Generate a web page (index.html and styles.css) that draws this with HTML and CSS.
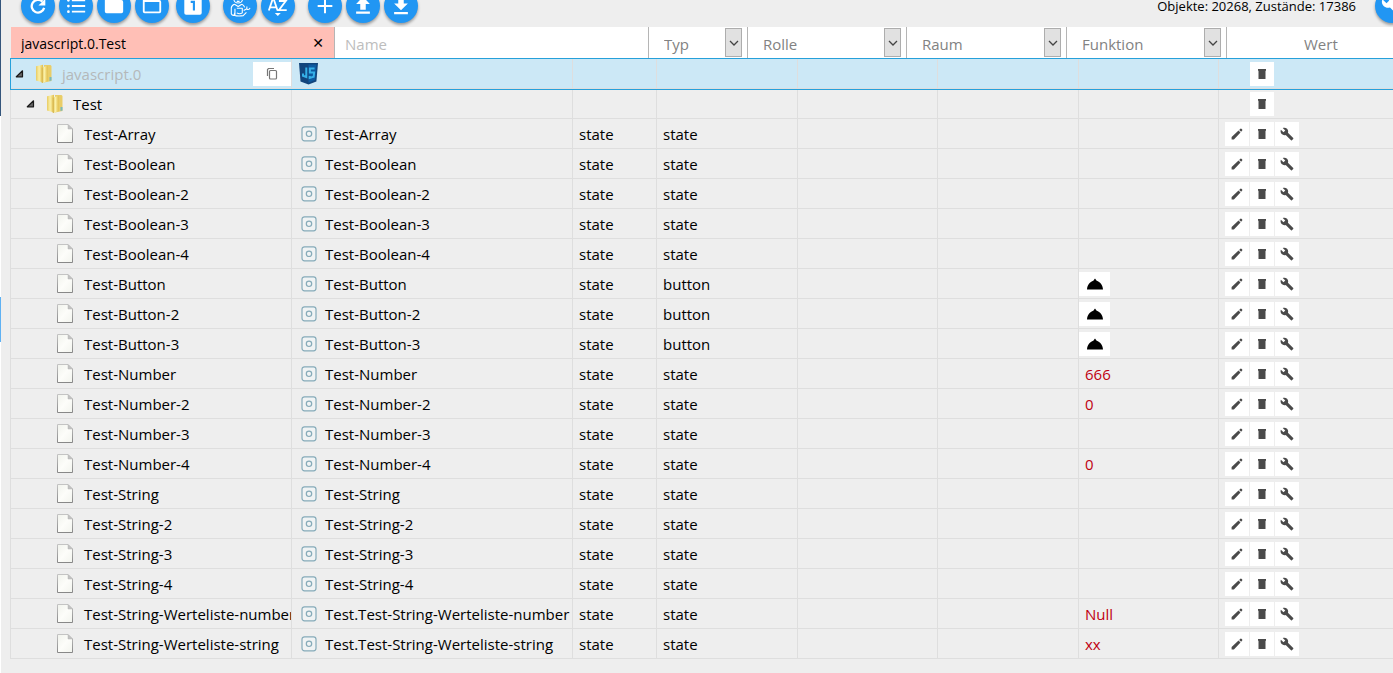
FILE: index.html
```html
<!DOCTYPE html>
<html lang="de">
<head>
<meta charset="utf-8">
<meta name="viewport" content="width=device-width, initial-scale=1">
<title>Objekte</title>
<link rel="stylesheet" href="styles.css">
</head>
<body>
<svg class="sprite" aria-hidden="true">
  <defs>
    <linearGradient id="gold" x1="0" x2="1"><stop offset="0" stop-color="#e8cb62"/><stop offset=".45" stop-color="#faf0a8"/><stop offset="1" stop-color="#e3c04c"/></linearGradient>
    <linearGradient id="paper" x1="0" y1="0" x2="1" y2="1"><stop offset="0" stop-color="#f0f2ec"/><stop offset=".5" stop-color="#fdfdfa"/><stop offset="1" stop-color="#f2f4ee"/></linearGradient>
    <linearGradient id="edge" x1="0" y1="0" x2="0" y2="1"><stop offset="0" stop-color="#c4c4c4"/><stop offset="1" stop-color="#888"/></linearGradient>
  </defs>
  <symbol id="folder" viewBox="0 0 18 20"><path d="M9 1h6.500l1 1v15L9 18.500z" fill="#e9cd68"/><path d="M1 2.200 8 .8v17.700l-7-2z" fill="url(#gold)"/><path d="M7 3.500 12.500 1.800v15.500L7 19z" fill="url(#gold)"/><path d="M7.200 3.500V19" stroke="#c9a437" stroke-width=".7"/><path d="M14.500 13h2v3.500l-2 .5z" fill="#79b9bd"/></symbol>
  <symbol id="page" viewBox="0 0 16 19"><path d="M.5.5h10.500l4.500 4.500v13.500H.5z" fill="url(#paper)" stroke="url(#edge)"/><path d="M11 .5V5h4.500z" fill="#c2c2c2" stroke="#b5b5b5" stroke-width=".5"/></symbol>
  <symbol id="arrow" viewBox="0 0 9 9"><path d="M7.500 1.800v6H1.300z" fill="#666" stroke="#1a1a1a" stroke-width="1.200" stroke-linejoin="round"/></symbol>
  <symbol id="state" viewBox="0 0 16 16"><rect x="1" y=".8" width="14" height="14" rx="2.500" fill="#f0f3f4" stroke="#86abb9" stroke-width="1.200"/><circle cx="8" cy="7.800" r="2.700" fill="none" stroke="#86abb9" stroke-width="1.200"/></symbol>
  <symbol id="js" viewBox="0 0 20 22"><path d="M0 0h19l-1.600 18.500L9.500 21.500l-8-3z" fill="#12457c"/><path d="M9.500 1.500h8l-1.400 15.500-6.600 2.700z" fill="#0d5aa0"/><path d="M7.300 4.500v9.500L4 12.800v-2.300M15.600 5.500h-4.700v4h4.200l-.4 4.300-4 1.100v-2" fill="none" stroke="#35b0e8" stroke-width="2"/></symbol>
  <symbol id="copy" viewBox="0 0 12 14"><path d="M1.500 9V2.500l1-1H8" fill="none" stroke="#777" stroke-width="1.200"/><rect x="3.500" y="3.500" width="7" height="8.500" rx="1" fill="none" stroke="#777" stroke-width="1.200"/></symbol>
  <symbol id="pencil" viewBox="0 0 12 12"><path d="M.6 11.400V9L7.500 2.500l2 2L2.900 11.400zM8.200 1.900l1.200-1.100q.5-.4 1 0l.8.8q.4.500 0 1L10.100 3.800z" fill="#4a4a4a"/></symbol>
  <symbol id="trash" viewBox="0 0 10 12"><path d="M1 1h8v1.700H1zM1.500 2.600h7V11h-7z" fill="#4a4a4a"/></symbol>
  <symbol id="wrench" viewBox="0 0 24 24"><path d="M22.700 19 13.600 9.900c.9-2.300.4-5-1.500-6.900-2-2-5-2.400-7.400-1.300L9 6 6 9 1.600 4.700C.4 7.100.9 10.100 2.900 12.100c1.900 1.900 4.600 2.400 6.900 1.500l9.100 9.100c.4.400 1 .4 1.400 0l2.300-2.300c.5-.4.5-1.100.1-1.400z"/></symbol>
  <symbol id="bell" viewBox="0 0 18 12"><path d="M1 11.500c.3-4.500 3-7.500 6.300-8.700L9 .5l1.700 2.300C14 4 16.700 7 17 11.500z" fill="#000"/></symbol>
  <symbol id="chevron" viewBox="0 0 10 6"><path d="m1 1 4 4 4-4" fill="none" stroke="#444" stroke-width="1.300"/></symbol>
  <symbol id="refresh" viewBox="0 0 24 24"><path d="M16.800 7.200A6.900 6.900 0 1 0 18.700 14" fill="none" stroke="#fff" stroke-width="2.500"/><path d="M20 4v7.500h-7.500z" fill="#fff"/></symbol>
  <symbol id="list" viewBox="0 0 24 24"><path d="M7.500 5.800H22M7.500 12H22M7.500 18.200H22" stroke="#fff" stroke-width="2"/><g fill="#fff"><circle cx="3.700" cy="5.800" r="1.500"/><circle cx="3.700" cy="12" r="1.500"/><circle cx="3.700" cy="18.200" r="1.500"/></g></symbol>
  <symbol id="closed" viewBox="0 0 24 24"><path d="M2 5q0-2 2-2h6l2 2.500h8q2 0 2 2V18q0 2-2 2H4q-2 0-2-2z" fill="#fff"/></symbol>
  <symbol id="open" viewBox="0 0 24 24"><path d="M2 5q0-2 2-2h6l2 2.500h8q2 0 2 2V18q0 2-2 2H4q-2 0-2-2zM4 7.500V18h16V7.500z" fill="#fff" fill-rule="evenodd"/></symbol>
  <symbol id="one" viewBox="0 0 24 24"><rect x="2.500" y="2" width="19" height="19.500" rx="2" fill="#fff"/><path d="M9.500 7.500h3.500V17" fill="none" stroke="#2196f3" stroke-width="2.300"/></symbol>
  <symbol id="expert" viewBox="0 0 24 24"><g fill="none" stroke="#fff" stroke-width="1.200" stroke-linejoin="round"><circle cx="10" cy="4" r="4.800"/><path d="M8 4h.5M11.500 4h.5M8.500 6.500q1.500 1 3 0M6 10l4 2.500L14 10M6 10q-3 .8-3.500 4v6.500q1 2.500 4 1.500v-7M14 10q2.500 1 3 3.500M8.500 14.500h6v5q-3 2-6 0M6.500 19l-1 3q4 1.500 10 .5l3.500-3.500M16 17l3.500-2V12.500M19.500 15.500q2.500 1 3.500-1.500"/></g></symbol>
  <symbol id="sort" viewBox="0 0 24 24"><path d="m2 17 4-12h1.500l4 12M3.600 13.500h6.300M13 6.500h7.500L13 16.500H21.500" fill="none" stroke="#fff" stroke-width="2"/><path d="M8.500 19.500h6.500L11.800 22.800z" fill="#fff"/></symbol>
  <symbol id="plus" viewBox="0 0 24 24"><path d="M12 4v16M4 12h16" stroke="#fff" stroke-width="2.200"/></symbol>
  <symbol id="upload" viewBox="0 0 24 24"><path d="M12 2 4.500 9.700H9V16h6V9.700h4.500zM4.500 18h15v2.500h-15z" fill="#fff"/></symbol>
  <symbol id="download" viewBox="0 0 24 24"><path d="M9 3v6.300H4.500L12 16.500l7.500-7.200H15V3zM4.500 18.500h15V21h-15z" fill="#fff"/></symbol>
</svg>

<div class="app">
  <div class="rail"><span class="rail-top"></span><span class="rail-mark"></span></div>
  <main class="objects">
    <div class="toolbar">
      <div class="group">
        <button class="round" aria-label="Aktualisieren"><svg><use href="#refresh"/></svg></button>
        <button class="round" aria-label="Listenansicht"><svg><use href="#list"/></svg></button>
        <button class="round" aria-label="Alle zuklappen"><svg><use href="#closed"/></svg></button>
        <button class="round" aria-label="Alle aufklappen"><svg><use href="#open"/></svg></button>
      </div>
      <div class="group near"><button class="round" aria-label="Eine Ebene"><svg><use href="#one"/></svg></button></div>
      <div class="group">
        <button class="round" aria-label="Expertenmodus"><svg><use href="#expert"/></svg></button>
        <button class="round" aria-label="Sortieren"><svg><use href="#sort"/></svg></button>
      </div>
      <div class="group">
        <button class="round" aria-label="Hinzufügen"><svg><use href="#plus"/></svg></button>
        <button class="round" aria-label="Hochladen"><svg><use href="#upload"/></svg></button>
        <button class="round" aria-label="Herunterladen"><svg><use href="#download"/></svg></button>
      </div>
      <p class="counts">Objekte: 20268, Zustände: 17386</p>
      <button class="round settings" aria-label="Einstellungen"><svg><use href="#wrench"/></svg></button>
    </div>

    <div class="filters">
      <div class="filter active"><input type="text" value="javascript.0.Test" aria-label="ID"><button class="clear" aria-label="Filter löschen">✕</button></div>
      <div class="filter"><input type="text" placeholder="Name" aria-label="Name"></div>
      <div class="filter pick"><select aria-label="Typ"><option>Typ</option></select><span class="drop"><svg><use href="#chevron"/></svg></span></div>
      <div class="filter pick"><select aria-label="Rolle"><option>Rolle</option></select><span class="drop"><svg><use href="#chevron"/></svg></span></div>
      <div class="filter pick"><select aria-label="Raum"><option>Raum</option></select><span class="drop"><svg><use href="#chevron"/></svg></span></div>
      <div class="filter pick"><select aria-label="Funktion"><option>Funktion</option></select><span class="drop"><svg><use href="#chevron"/></svg></span></div>
      <div class="filter value-head">Wert</div>
    </div>

    <table class="tree">
      <colgroup><col class="c-id"><col class="c-name"><col class="c-type"><col class="c-role"><col class="c-room"><col class="c-function"><col class="c-value"><col></colgroup>
      <tbody id="rows">
        <tr class="selected">
          <td><div class="node"><svg class="arrow"><use href="#arrow"/></svg><svg class="folder"><use href="#folder"/></svg><span class="label">javascript.0</span><button class="copy" aria-label="Kopieren"><svg><use href="#copy"/></svg></button></div></td>
          <td><div class="name"><svg class="js"><use href="#js"/></svg></div></td>
          <td></td><td></td><td></td><td></td><td></td>
          <td><div class="actions only"><button class="tool" aria-label="Löschen"><svg><use href="#trash"/></svg></button></div></td>
        </tr>
        <tr>
          <td><div class="node level-1"><svg class="arrow"><use href="#arrow"/></svg><svg class="folder"><use href="#folder"/></svg><span class="label">Test</span></div></td>
          <td></td><td></td><td></td><td></td><td></td><td></td>
          <td><div class="actions only"><button class="tool" aria-label="Löschen"><svg><use href="#trash"/></svg></button></div></td>
        </tr>
      </tbody>
    </table>
  </main>
</div>
<script src="script.js"></script>
</body>
</html>
```
FILE: styles.css
```css
* { box-sizing: border-box; }

body {
  margin: 0;
  overflow: hidden;
  background: #eee;
  color: #000;
  font: 15px/22px "Open Sans", "Noto Sans", sans-serif;
}

button, input, select { font: inherit; color: inherit; border: 0; padding: 0; margin: 0; }
button { cursor: pointer; }
svg { display: block; flex: none; }
.sprite { position: absolute; width: 0; height: 0; }

.app { display: flex; min-height: 100vh; }
.rail { flex: none; width: 1px; background: #fff; }
.rail span { display: block; }
.rail-top { height: 116px; background: #34567c; }
.rail-mark { height: 45px; margin-top: 181px; background: #5eb1f3; }
.objects { flex: 1; min-width: 0; padding-left: 9px; }

.toolbar {
  display: flex;
  align-items: flex-end;
  gap: 13px;
  height: 27px;
  padding: 0 0 4px 11px;
}
.group { display: flex; gap: 4px; }
.group.near { margin-left: -6px; }
.round {
  display: grid;
  place-items: center;
  flex: none;
  width: 34px;
  height: 34px;
  border-radius: 50%;
  background: #2196f3;
  box-shadow: 0 2px 3px rgba(0, 0, 0, .35);
}
.round svg { width: 22px; height: 22px; fill: #fff; }
.counts { margin: 0 6px 6px auto; font-size: 13px; white-space: nowrap; }
.settings { margin-right: -16px; }

.filters {
  display: grid;
  grid-template-columns: 324px 314px 99px 159px 160px 160px 1fr;
  height: 32px;
  margin-left: 1px;
  background: #fff;
  color: #828282;
}
.filter { display: flex; min-width: 0; border-right: 1px solid #b5b5b5; }
.filter:last-child { border-right: 0; }
.filter input { flex: 1; min-width: 0; padding: 2px 10px 0; background: none; outline: 0; }
.filter input::placeholder { color: #bdbdbd; opacity: 1; }
.filter.active { background: #ffbfb6; color: #000; font-size: 14px; }
.clear { width: 32px; background: none; font: 14px/20px "DejaVu Sans", sans-serif; }
.pick { display: grid; grid-template-columns: 1fr 17px 5px; }
.pick select {
  grid-area: 1 / 1 / 2 / 4;
  appearance: none;
  padding: 2px 0 0 15px;
  background: none;
}
.drop {
  grid-area: 1 / 2;
  display: grid;
  place-items: center;
  height: 29px;
  margin-top: 1px;
  border: 1px solid #adadad;
  background: #e1e1e1;
  pointer-events: none;
}
.drop svg { width: 10px; height: 6px; }
.value-head { align-items: center; padding: 2px 0 0 77px; }

.tree {
  width: 100%;
  table-layout: fixed;
  border-collapse: separate;
  border-spacing: 0;
  border-left: 1px solid #dedede;
}
.c-id, .c-name { width: 281px; }
.c-type { width: 84px; }
.c-role, .c-function { width: 141px; }
.c-room, .c-value { width: 140px; }
.tree td {
  height: 30px;
  padding: 1px 0 0 6px;
  border-right: 1px solid #dedede;
  border-bottom: 1px solid #dedede;
  overflow: hidden;
  white-space: nowrap;
}
.tree td:first-child { padding: 0 0 0 4px; }
.tree td:nth-child(2), .tree td:last-child { padding-top: 0; }
.tree td:last-child { border-right: 0; }
.selected { background: #cce8f6; outline: 1px solid #26a0da; }
.selected .label { color: #b4b8ba; }

.node, .name { display: flex; align-items: center; height: 29px; }
.label, .name span { padding-top: 1px; }
.arrow { width: 9px; height: 9px; margin-right: 11px; }
.folder { width: 18px; height: 20px; margin-right: 9px; }
.level-1 { padding-left: 11px; }
.level-2 { padding-left: 42px; }
.page { width: 16px; height: 19px; margin-right: 11px; }
.copy { display: grid; place-items: center; width: 38px; height: 24px; margin-left: auto; background: #fff; }
.copy svg { width: 12px; height: 14px; }
.js { width: 20px; height: 22px; }
.name { gap: 8px; padding-left: 1px; }
.state { width: 16px; height: 16px; margin-left: 2px; }
.value { color: #c00010; }
.tree .has-button { padding: 0; }
.press { display: grid; place-items: center; width: 31px; height: 24px; background: #fff; }
.press svg { width: 18px; height: 12px; }
.actions { display: flex; gap: 1px; }
.actions.only { padding-left: 25px; }
.tool { display: grid; place-items: center; width: 24px; height: 24px; background: #fff; }
.tool svg { width: 12px; height: 12px; fill: #4a4a4a; }
.tool .wide { width: 14px; height: 14px; }
```
FILE: script.js
```js
const states = [
  ["Test-Array"],
  ["Test-Boolean"],
  ["Test-Boolean-2"],
  ["Test-Boolean-3"],
  ["Test-Boolean-4"],
  ["Test-Button", "button"],
  ["Test-Button-2", "button"],
  ["Test-Button-3", "button"],
  ["Test-Number", "state", "666"],
  ["Test-Number-2", "state", "0"],
  ["Test-Number-3"],
  ["Test-Number-4", "state", "0"],
  ["Test-String"],
  ["Test-String-2"],
  ["Test-String-3"],
  ["Test-String-4"],
  ["Test-String-Werteliste-number", "state", "Null", "Test.Test-String-Werteliste-number"],
  ["Test-String-Werteliste-string", "state", "xx", "Test.Test-String-Werteliste-string"]
];

const icon = (id, cls = "") => `<svg class="${cls}"><use href="#${id}"/></svg>`;
const tool = (label, id, cls) => `<button class="tool" aria-label="${label}">${icon(id, cls)}</button>`;

const row = ([id, role = "state", value = "", name = id]) => `
  <tr>
    <td><div class="node level-2">${icon("page", "page")}<span class="label">${id}</span></div></td>
    <td><div class="name">${icon("state", "state")}<span>${name}</span></div></td>
    <td>state</td>
    <td>${role}</td>
    <td></td>
    <td></td>
    ${role === "button"
      ? `<td class="has-button"><button class="press" aria-label="Auslösen">${icon("bell")}</button></td>`
      : `<td class="value">${value}</td>`}
    <td><div class="actions">${tool("Bearbeiten", "pencil")}${tool("Löschen", "trash")}${tool("Einstellungen", "wrench", "wide")}</div></td>
  </tr>`;

document.getElementById("rows").insertAdjacentHTML("beforeend", states.map(row).join(""));
```
